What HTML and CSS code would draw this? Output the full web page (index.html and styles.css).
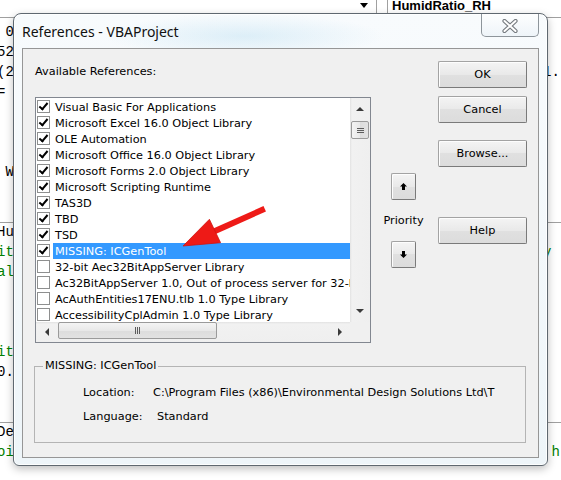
FILE: index.html
```html
<!DOCTYPE html>
<html lang="en">
<head>
    <meta charset="UTF-8">
    <title>References - VBAProject</title>
    <link rel="stylesheet" href="styles.css">
</head>
<body>
    <div class="editor">
        <div class="combos">
            <div class="combo combo-object"><span class="drop"></span></div>
            <div class="combo combo-proc">HumidRatio_RH</div>
        </div>
        <div class="code">
            <div class="ln"> 0.0065 * dblAlt) ^ 5.2559</div>
            <div class="ln">52 + 0.0000026 * dblT ^ 2</div>
            <div class="ln">(2 * dblW + 0.62198)<span class="pad w45"></span>1.</div>
            <div class="ln">= dblPw / (dblP - dblPw)</div>
            <div class="ln">  dblWs = 0.62198 * dblPws / (dblP - dblPws)</div>
            <div class="ln">  If dblW &lt; 0 Then dblW = 0</div>
            <div class="ln"></div>
            <div class="ln"> W = dblW</div>
            <div class="ln"></div>
            <div class="ln"></div>
            <div class="ln sep">HumidRatio_RH(dblTdb As Double, dblRH As Double) As Double</div>
            <div class="ln cm">it returns the humidity ratio (kg/kg dry air)<span class="pad w20"></span>y</div>
            <div class="ln cm">al humidity RH (0 - 100 %)</div>
            <div class="ln">  Dim dblPws As Double, dblPw As Double</div>
            <div class="ln">  dblPws = SatPress(dblTdb)</div>
            <div class="ln">  dblPw = dblRH / 100 * dblPws</div>
            <div class="ln cm">it(s) assumed to be 101.325 kPa</div>
            <div class="ln">0.62198 * dblPw / (101.325 - dblPw)</div>
            <div class="ln"></div>
            <div class="ln"></div>
            <div class="ln sep">DewPoint_RH(dblTdb As Double, dblRH As Double) As Double</div>
            <div class="ln cm">oint (deg C) using the Magnus formula<span class="pad w29"></span>h</div>
        </div>
    </div>

    <div class="dialog">
        <div class="titlebar">
            <span class="title">References - VBAProject</span>
            <div class="close">
                <svg width="16" height="14" viewBox="0 0 16 14">
                    <path d="M2.5 2 L13.5 12 M13.5 2 L2.5 12" stroke="#74797e" stroke-width="4.2" stroke-linecap="round"/>
                    <path d="M2.5 2 L13.5 12 M13.5 2 L2.5 12" stroke="#ffffff" stroke-width="2" stroke-linecap="round"/>
                </svg>
            </div>
        </div>
        <div class="client">
            <div class="top">
                <div class="refs">
                    <div class="caption">Available References:</div>
                    <div class="listbox">
                        <div class="rows">
                            <div class="row"><span class="chk on"></span><span class="name">Visual Basic For Applications</span></div>
                            <div class="row"><span class="chk on"></span><span class="name">Microsoft Excel 16.0 Object Library</span></div>
                            <div class="row"><span class="chk on"></span><span class="name">OLE Automation</span></div>
                            <div class="row"><span class="chk on"></span><span class="name">Microsoft Office 16.0 Object Library</span></div>
                            <div class="row"><span class="chk on"></span><span class="name">Microsoft Forms 2.0 Object Library</span></div>
                            <div class="row"><span class="chk on"></span><span class="name">Microsoft Scripting Runtime</span></div>
                            <div class="row"><span class="chk on"></span><span class="name">TAS3D</span></div>
                            <div class="row"><span class="chk on"></span><span class="name">TBD</span></div>
                            <div class="row"><span class="chk on"></span><span class="name">TSD</span></div>
                            <div class="row selected"><span class="chk on"></span><span class="name">MISSING: ICGenTool</span></div>
                            <div class="row"><span class="chk"></span><span class="name">32-bit Aec32BitAppServer Library</span></div>
                            <div class="row"><span class="chk"></span><span class="name">Ac32BitAppServer 1.0, Out of process server for 32-bit applications</span></div>
                            <div class="row"><span class="chk"></span><span class="name">AcAuthEntities17ENU.tlb 1.0 Type Library</span></div>
                            <div class="row"><span class="chk"></span><span class="name">AccessibilityCplAdmin 1.0 Type Library</span></div>
                        </div>
                        <div class="vscroll">
                            <div class="sbtn"><span class="tri up"></span></div>
                            <div class="track"><div class="thumb"><span class="grip"></span></div></div>
                            <div class="sbtn"><span class="tri down"></span></div>
                        </div>
                        <div class="hscroll">
                            <div class="sbtn"><span class="tri left"></span></div>
                            <div class="track"><div class="thumb"><span class="grip"></span></div></div>
                            <div class="sbtn"><span class="tri right"></span></div>
                        </div>
                        <div class="corner"></div>
                    </div>
                </div>

                <div class="priority">
                    <button class="btn move">
                        <svg width="7" height="7" viewBox="0 0 7 7"><path d="M3.5 0 L7 3.5 H5 V7 H2 V3.5 H0 Z" fill="#000"/></svg>
                    </button>
                    <span class="prio-label">Priority</span>
                    <button class="btn move">
                        <svg width="7" height="7" viewBox="0 0 7 7"><path d="M3.5 7 L7 3.5 H5 V0 H2 V3.5 H0 Z" fill="#000"/></svg>
                    </button>
                </div>

                <div class="buttons">
                    <button class="btn">OK</button>
                    <button class="btn cancel">Cancel</button>
                    <button class="btn browse">Browse...</button>
                    <button class="btn help">Help</button>
                </div>
            </div>

            <fieldset class="details">
                <legend>MISSING: ICGenTool</legend>
                <div class="prop"><span class="key">Location:</span><span class="val">C:\Program Files (x86)\Environmental Design Solutions Ltd\T</span></div>
                <div class="prop lang"><span class="key">Language:</span><span class="val">Standard</span></div>
            </fieldset>
        </div>
    </div>

    <svg class="pointer" width="92" height="48" viewBox="0 0 92 48">
        <path d="M37 27 L84 6" stroke="#ee1a17" stroke-width="6" stroke-linecap="square"/>
        <path d="M5 42 L42.6 38.7 L31.4 15.3 Z" fill="#ee1a17" stroke="#d11410" stroke-width="0.8" stroke-linejoin="round"/>
    </svg>
</body>
</html>
```

FILE: styles.css
```css
body {
    margin: 0;
    background: #ffffff;
    font-family: "DejaVu Sans", sans-serif;
    font-size: 11.3px;
    color: #000000;
    overflow: hidden;
}

/* code window behind the dialog */
.editor {
    width: 561px;
    height: 480px;
    overflow: hidden;
}

.combos {
    display: flex;
    height: 18px;
}

.combo {
    box-sizing: border-box;
    height: 18px;
    border-bottom: 1px solid #a0a0a0;
}

.combo-object {
    width: 377px;
    border-right: 1px solid #a0a0a0;
    display: flex;
    justify-content: flex-end;
    padding: 3px 8px 0 0;
}

.drop {
    width: 0;
    height: 0;
    border-left: 4px solid transparent;
    border-right: 4px solid transparent;
    border-top: 5px solid #000;
}

.combo-proc {
    flex: 1;
    margin-left: 10px;
    border-left: 1px solid #a0a0a0;
    padding-left: 4px;
    font-family: "Liberation Sans", sans-serif;
    font-weight: bold;
    font-size: 13px;
    line-height: 11px;
}

.code {
    width: 580px;
    margin: 4px 0 0 -3px;
    font-family: "Liberation Mono", monospace;
    font-size: 14px;
}

.ln {
    height: 20px;
    line-height: 20px;
    white-space: pre;
}

.ln.sep {
    box-shadow: inset 0 1px 0 #a0a0a0;
}

.cm {
    color: #008000;
}

.pad { display: inline-block; }
.w20 { width: 20ch; }
.w29 { width: 29ch; }
.w45 { width: 45ch; }

/* dialog window */
.dialog {
    position: absolute;
    left: 13px;
    top: 13px;
    width: 535px;
    height: 453px;
    box-sizing: border-box;
    display: flex;
    flex-direction: column;
    padding: 0 8px 7px 8px;
    border: 1px solid #5f6870;
    border-radius: 8px 8px 6px 6px;
    background:
        radial-gradient(ellipse 140px 22px at 230px 22px, rgba(170, 215, 238, 0.35), transparent),
        linear-gradient(#f8fbfd, #eef5f9);
    box-shadow: inset 0 0 0 1px rgba(255, 255, 255, 0.85), 0 3px 8px rgba(0, 0, 0, 0.25);
}

.titlebar {
    height: 34px;
    display: flex;
    align-items: flex-start;
}

.title {
    font-family: "Noto Sans", sans-serif;
    font-size: 14px;
    line-height: 20px;
    margin-top: 8px;
    color: #111;
}

.close {
    margin-left: auto;
    width: 58px;
    height: 23px;
    box-sizing: border-box;
    border: 1px solid #8e959b;
    border-top: none;
    border-radius: 0 0 5px 5px;
    background: linear-gradient(rgba(255, 255, 255, 0.8), rgba(232, 240, 246, 0.6));
    display: flex;
    align-items: center;
    justify-content: center;
    padding-top: 2px;
}

.client {
    flex: 1;
    background: #f0f0f0;
    border: 1px solid #969696;
    display: flex;
    flex-direction: column;
}

.top {
    display: flex;
    padding: 12px 0 0 12px;
}

.refs {
    width: 336px;
    padding-top: 3px;
}

.caption {
    line-height: 16px;
}

.listbox {
    margin-top: 17px;
    border: 1px solid #828790;
    background: #fff;
    display: grid;
    grid-template-columns: 314px 20px;
    grid-template-rows: 224px 20px;
}

.rows {
    padding-top: 1px;
    overflow: hidden;
}

.row {
    display: flex;
    height: 16px;
}

.chk {
    flex: none;
    position: relative;
    width: 13px;
    height: 13px;
    box-sizing: border-box;
    margin: 1px 3px 0 1px;
    border: 1px solid #8e8f8f;
    background: #fff;
}

.chk.on::after {
    content: "";
    position: absolute;
    left: 3px;
    top: 0;
    width: 3px;
    height: 7px;
    border: solid #000;
    border-width: 0 2px 2px 0;
    transform: rotate(40deg);
}

.name {
    flex: 1;
    box-sizing: border-box;
    height: 16px;
    padding: 1px 0 0 2px;
    line-height: 15px;
    white-space: nowrap;
    overflow: hidden;
}

.row.selected .name {
    background: #3399ff;
    color: #fff;
}

/* scrollbars */
.vscroll {
    display: flex;
    flex-direction: column;
    background: linear-gradient(to right, #e2e2e2, #f1f1f1 2px, #efefef);
}

.vscroll .sbtn {
    height: 22px;
}

.vscroll .track {
    flex: 1;
    padding-top: 1px;
}

.vscroll .thumb {
    height: 18px;
    margin: 0 1px;
    background: linear-gradient(to right, #f4f4f4, #e8e8e8 50%, #dcdcdc 50%, #e2e2e2);
}

.hscroll {
    display: flex;
    background: linear-gradient(#e2e2e2, #f1f1f1 2px, #efefef);
}

.hscroll .sbtn {
    width: 21px;
}

.hscroll .track {
    flex: 1;
    padding-left: 1px;
}

.hscroll .thumb {
    width: 159px;
    height: 17px;
    margin-top: 0;
    background: linear-gradient(#f4f4f4, #e8e8e8 50%, #dcdcdc 50%, #e2e2e2);
}

.sbtn {
    display: flex;
    align-items: center;
    justify-content: center;
}

.thumb {
    box-sizing: border-box;
    border: 1px solid #9a9a9a;
    border-radius: 2px;
    display: flex;
    align-items: center;
    justify-content: center;
}

.vscroll .grip {
    width: 7px;
    height: 5px;
    background: repeating-linear-gradient(#5c5c5c 0 1px, transparent 1px 2px);
}

.hscroll .grip {
    width: 5px;
    height: 7px;
    background: repeating-linear-gradient(to right, #5c5c5c 0 1px, transparent 1px 2px);
}

.corner {
    background: #f0f0f0;
}

.tri {
    width: 0;
    height: 0;
}

.tri.up {
    border-left: 4px solid transparent;
    border-right: 4px solid transparent;
    border-bottom: 4px solid #3a3a3a;
}

.tri.down {
    border-left: 4px solid transparent;
    border-right: 4px solid transparent;
    border-top: 4px solid #3a3a3a;
}

.tri.left {
    border-top: 4px solid transparent;
    border-bottom: 4px solid transparent;
    border-right: 4px solid #3a3a3a;
}

.tri.right {
    border-top: 4px solid transparent;
    border-bottom: 4px solid transparent;
    border-left: 4px solid #3a3a3a;
}

/* buttons */
.btn {
    box-sizing: border-box;
    height: 27px;
    padding: 0;
    font: inherit;
    color: #000;
    border: 1px solid #a3a3a3;
    border-right-color: #7a7a7a;
    border-bottom-color: #7a7a7a;
    border-radius: 2px;
    background: linear-gradient(#f4f4f4, #e9e9e9 50%, #e0e0e0 50%, #dcdcdc);
    box-shadow: inset 1px 1px 0 #fdfdfd;
}

.priority {
    width: 43px;
    margin-left: 11px;
    padding-top: 112px;
    display: flex;
    flex-direction: column;
    align-items: center;
}

.btn.move {
    width: 25px;
    display: flex;
    align-items: center;
    justify-content: center;
}

.prio-label {
    line-height: 16px;
    margin: 13px 0 12px 0;
}

.buttons {
    width: 89px;
    margin-left: 13px;
    display: flex;
    flex-direction: column;
}

.btn.cancel { margin-top: 8px; }
.btn.browse { margin-top: 17px; }
.btn.help { margin-top: 50px; }

/* details group */
.details {
    margin: 15px 12px 0 11px;
    padding: 0 0 17px 8px;
    border: 1px solid #b4b4b4;
}

.details legend {
    padding: 0 2px;
    line-height: 16px;
}

.prop {
    display: flex;
    padding-left: 40px;
    line-height: 16px;
    margin-top: 11px;
}

.prop.lang {
    margin-top: 8px;
}

.key {
    width: 70px;
}

.prop.lang .val {
    padding-left: 4px;
}

.pointer {
    position: absolute;
    left: 178px;
    top: 204px;
}
```
